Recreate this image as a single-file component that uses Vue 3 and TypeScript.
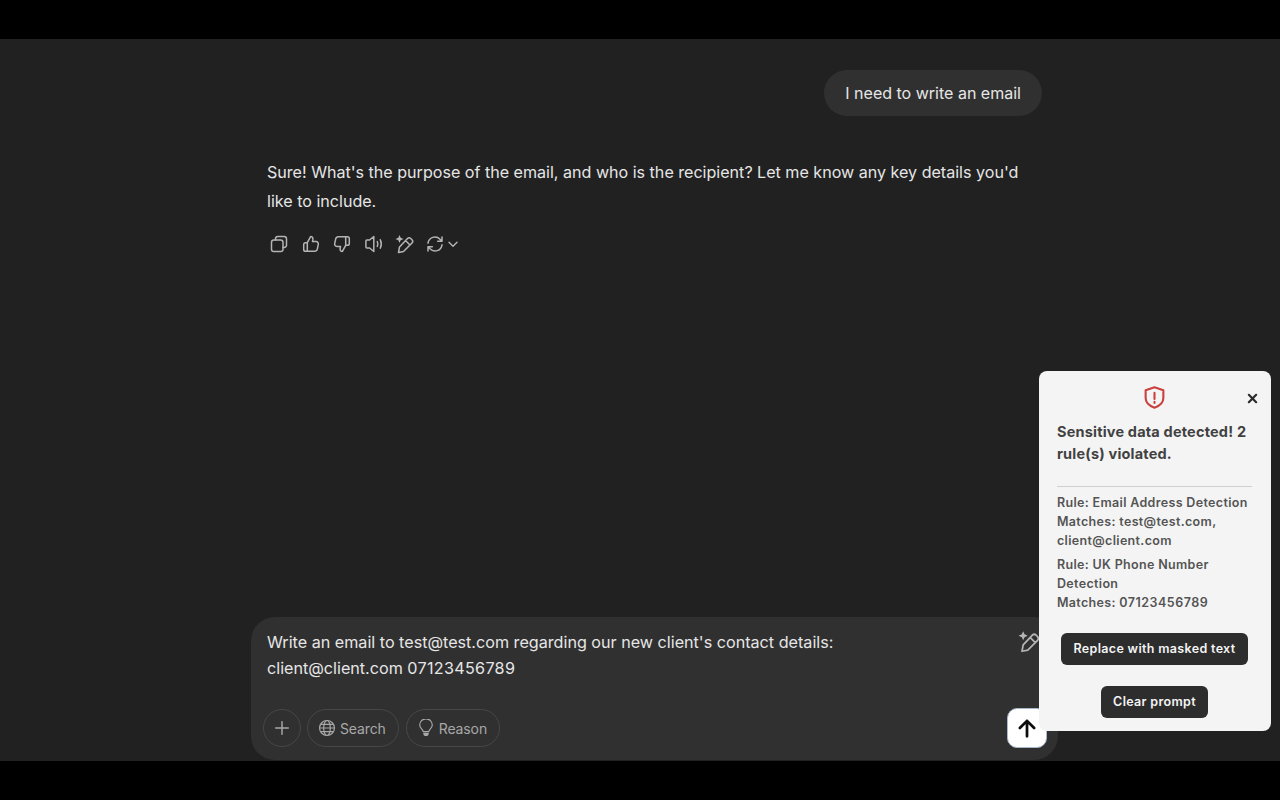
<script setup lang="ts">
const toolsNote: string = 'chat'
</script>

<template>
  <div class="page" :data-note="toolsNote">
    <div class="bar"></div>
    <main class="main">
      <section class="thread">
        <div class="user-row"><div class="bubble">I need to write an email</div></div>
        <p class="answer">Sure! What's the purpose of the email, and who is the recipient? Let me know any key details you'd like to include.</p>
        <div class="actions">
          <svg class="ic" viewBox="0 0 20 20"><rect x="2.500" y="6" width="11.500" height="11.500" rx="2.300"/><path d="M6.500 6V4.800a2.300 2.300 0 0 1 2.300-2.300h6.400a2.300 2.300 0 0 1 2.300 2.300v6.400a2.300 2.300 0 0 1-2.300 2.300H14"/></svg>
          <svg class="ic" viewBox="0 0 20 20"><path d="M6.300 8.700 9.600 2.600c1.500 0 2.500 1.100 2.300 2.600L11.500 7.600h3.600c1.500 0 2.500 1.300 2.200 2.700l-1 4.800c-.3 1.300-1.300 2.200-2.700 2.200H4.600c-1.100 0-1.900-.8-1.900-1.900v-4.800c0-1.100.8-1.900 1.900-1.900zM6.300 8.700v8.600"/></svg>
          <svg class="ic" viewBox="0 0 20 20"><path d="M13.700 11.300 10.400 17.400c-1.500 0-2.500-1.100-2.300-2.600l.4-2.400H4.900c-1.500 0-2.500-1.300-2.200-2.700l1-4.800C4 3.600 5 2.700 6.400 2.700h9c1.100 0 1.900.8 1.900 1.900v4.800c0 1.100-.8 1.900-1.900 1.900zM13.700 11.300V2.700"/></svg>
          <svg class="ic" viewBox="0 0 20 20"><path d="M9.800 2.500 5.600 6H2.900c-.6 0-1 .4-1 1v6c0 .6.4 1 1 1h2.700l4.200 3.500zM13.300 7.500c.7 1.600.7 3.400 0 5M16.300 5.800c1.300 2.700 1.300 5.700 0 8.400"/></svg>
          <svg class="ic" viewBox="0 0 20 20"><path d="M12.500 4.500a2.300 2.300 0 0 1 3.200 0l1.300 1.300a2.300 2.300 0 0 1 0 3.200L8.500 17.500l-5 1 1-5.500zM10.500 6.500l4.500 4.500"/><path class="fill" d="M4.500 1 5.700 3.800 8.500 5 5.700 6.200 4.500 9 3.300 6.200.5 5 3.300 3.800z"/></svg>
          <span class="regen">
            <svg class="ic" viewBox="0 0 20 20"><path d="M3 9.200A7 7 0 0 1 15 5.200l1.800 2M17 3v4.300h-4.300M17 10.800A7 7 0 0 1 5 14.800l-1.800-2M3 17v-4.300h4.300"/></svg>
            <svg class="chev" viewBox="0 0 12 12"><path d="M2 4.200 6 8.200l4-4"/></svg>
          </span>
        </div>
      </section>

      <section class="composer">
        <div class="prompt-row">
          <p class="prompt">Write an email to test@test.com regarding our new client's contact details:<br>client@client.com <span class="digits">07123456789</span></p>
          <svg class="wand" viewBox="0 0 20 20"><path d="M12.500 4.500a2.300 2.300 0 0 1 3.200 0l1.300 1.300a2.300 2.300 0 0 1 0 3.200L8.500 17.500l-5 1 1-5.500zM10.500 6.500l4.500 4.500"/><path class="fill" d="M4.500 1 5.700 3.800 8.500 5 5.700 6.200 4.500 9 3.300 6.200.5 5 3.300 3.800z"/></svg>
        </div>
        <div class="tools">
          <button class="pill round" aria-label="Add">
            <svg class="tool-ic plus" viewBox="0 0 20 20"><path d="M10 3v14M3 10h14"/></svg>
          </button>
          <button class="pill">
            <svg class="tool-ic" viewBox="0 0 20 20"><circle cx="10" cy="10" r="8.300"/><ellipse cx="10" cy="10" rx="3.700" ry="8.300"/><path d="M1.700 10h16.600M2.800 6h14.400M2.800 14h14.400"/></svg>
            <span>Search</span>
          </button>
          <button class="pill">
            <svg class="tool-ic" viewBox="0 0 20 20"><path d="M6.900 14c0-2.200-3.900-3.600-3.900-7.200a7 7 0 0 1 14 0c0 3.600-3.900 5-3.900 7.200z"/><path class="bulb-base" d="M7 15.200h6v1.500c0 1.400-1.200 2.300-3 2.300s-3-.9-3-2.300z"/></svg>
            <span>Reason</span>
          </button>
          <button class="send" aria-label="Send">
            <svg viewBox="0 0 20 20"><path d="M10 17.500V3.500M3.500 10 10 3.500l6.500 6.500"/></svg>
          </button>
        </div>
      </section>

      <aside class="popup">
        <div class="popup-head">
          <svg class="shield" viewBox="0 0 24 24"><path d="M12 2.200 20.500 5v7.500c0 4.500-3.300 7.500-8.500 9.300-5.200-1.800-8.500-4.800-8.500-9.300V5z"/><path d="M12 7.500v6M12 16v1.200"/></svg>
          <button class="close" aria-label="Close"><svg viewBox="0 0 12 12"><path d="M2 2l8 8M10 2l-8 8"/></svg></button>
        </div>
        <h2 class="title">Sensitive data detected! 2 rule(s) violated.</h2>
        <hr class="rule">
        <p class="detail">Rule: Email Address Detection<br>Matches: test@test.com, client@client.com</p>
        <p class="detail second">Rule: UK Phone Number Detection<br>Matches: <span class="digits-sm">07123456789</span></p>
        <div class="popup-actions">
          <button class="dark">Replace with masked text</button>
          <button class="dark">Clear prompt</button>
        </div>
      </aside>
    </main>
    <div class="bar"></div>
  </div>
</template>

<style>
html, body { margin: 0; background: #000; }
</style>

<style scoped>
.page { width: 1280px; height: 800px; display: flex; flex-direction: column; overflow: hidden; background: #000; font-family: Inter, "Noto Sans", sans-serif; }
.bar { height: 39px; flex: none; background: #000; }
.main { position: relative; flex: 1; min-height: 0; background: #212121; display: flex; flex-direction: column; padding-left: 251px; }
.thread { flex: 1; width: 775px; padding: 31px 16px 0; box-sizing: content-box; }
.user-row { display: flex; justify-content: flex-end; }
.bubble { height: 46px; padding: 0 21px; border-radius: 23px; background: #303030; color: #e6e6e6; font-size: 16.030px; line-height: 46px; }
.answer { margin: 42px 0 0; color: #e6e6e6; font-size: 16.090px; line-height: 29px; }
.actions { display: flex; align-items: center; gap: 11.500px; margin: 13px 0 0 2px; height: 30px; }
.ic { width: 20px; height: 20px; flex: none; fill: none; stroke: #b4b4b4; stroke-width: 1.500; stroke-linejoin: round; stroke-linecap: round; }
.ic .fill, .wand .fill { fill: #b4b4b4; stroke: none; }
.regen { display: flex; align-items: center; gap: 2px; margin-left: -2px; }
.chev { width: 12px; height: 12px; fill: none; stroke: #b4b4b4; stroke-width: 1.400; stroke-linecap: round; stroke-linejoin: round; }
.composer { width: 807px; height: 143px; flex: none; margin-bottom: 1px; box-sizing: border-box; padding: 13px 12px 12px; background: #303030; border-radius: 24px; display: flex; flex-direction: column; justify-content: space-between; }
.prompt-row { display: flex; justify-content: space-between; padding: 0 4px 0 4px; }
.prompt { margin: 0; color: #e6e6e6; font-size: 16.150px; line-height: 25.500px; }
.digits { letter-spacing: .3px; }
.digits-sm { letter-spacing: .5px; }
.wand { width: 23px; height: 23px; flex: none; fill: none; stroke: #b4b4b4; stroke-width: 1.500; stroke-linejoin: round; margin-right: 1px; }
.tools { display: flex; align-items: center; gap: 7px; height: 40px; position: relative; }
.pill { height: 38px; padding: 0 12px 0 10px; box-sizing: border-box; display: flex; align-items: center; gap: 4px; border: 1px solid #474747; border-radius: 19px; background: transparent; color: #a8a8a8; font: 14px Inter, sans-serif; letter-spacing: -.12px; }
.pill.round { width: 38px; padding: 0; justify-content: center; margin-right: -1px; }
.tool-ic { width: 18px; height: 18px; fill: none; stroke: #a8a8a8; stroke-width: 1.300; stroke-linejoin: round; }
.tool-ic .bulb-base { fill: #a8a8a8; stroke: none; }
.plus { stroke-linecap: round; stroke-width: 1.600; }
.send { position: absolute; right: -1px; top: 0; width: 40px; height: 40px; box-sizing: border-box; padding: 0; background: #fff; border: 1px solid #a9b7cc; border-radius: 10px; display: flex; align-items: center; justify-content: center; }
.send svg { width: 22px; height: 22px; fill: none; stroke: #0d0d0d; stroke-width: 2.500; stroke-linecap: round; stroke-linejoin: round; }
.popup { position: absolute; left: 1039px; top: 332px; width: 232px; height: 360px; box-sizing: border-box; padding: 13px 18px 0 18px; background: #f4f4f4; border-radius: 8px; color: #414141; }
.popup-head { height: 28px; display: flex; justify-content: center; position: relative; left: -1px; }
.shield { width: 25px; height: 25px; margin-top: 1px; fill: none; stroke: #c9403c; stroke-width: 2; stroke-linejoin: round; stroke-linecap: round; }
.close { position: absolute; right: -6px; top: 9px; width: 11px; height: 11px; padding: 0; border: 0; background: none; display: flex; }
.close svg { width: 11px; height: 11px; fill: none; stroke: #2b2b2b; stroke-width: 2.400; stroke-linecap: round; }
.title { margin: 9px -6px 0 0; font-size: 14.500px; font-weight: 700; line-height: 22px; letter-spacing: .19px; }
.rule { height: 1px; border: 0; background: #cfcfcf; margin: 21px 1px 5.500px 0; }
.detail { margin: 0; font-size: 12.500px; font-weight: 600; line-height: 19px; color: #545454; letter-spacing: .33px; }
.second { margin-top: 5px; width: 170px; }
.popup-actions { display: flex; flex-direction: column; align-items: center; gap: 21px; margin-top: 21px; margin-right: 1px; }
.dark { height: 32px; padding: 0 12.500px; background: #2d2d2d; color: #f4f4f4; border: 0; border-radius: 6px; font: 600 12.500px/32px Inter, sans-serif; letter-spacing: .33px; }
</style>
